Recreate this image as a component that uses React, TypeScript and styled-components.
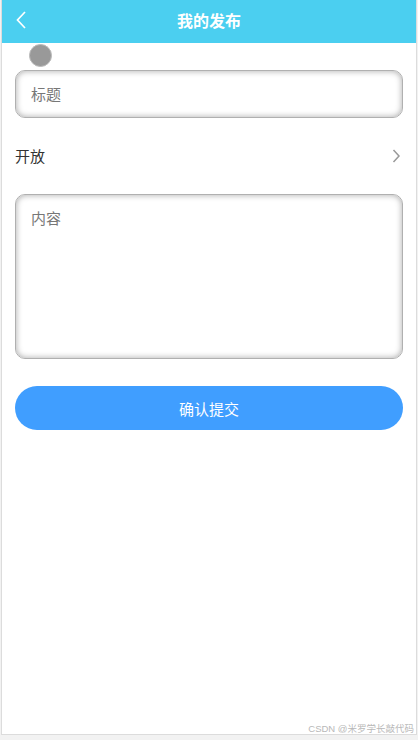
import React from 'react';
import styled, { createGlobalStyle } from 'styled-components';

const GlobalStyle = createGlobalStyle`
  html, body {
    margin: 0;
    padding: 0;
    background: #f2f2f2;
  }
  body {
    font-family: "Liberation Sans", "Noto Sans CJK SC", sans-serif;
  }
`;

const App = () => {
  return (
    <>
      <GlobalStyle />
      <Frame>
        <NavBar>
          <BackButton>
            <svg width="14" height="18" viewBox="0 0 14 18">
              <path d="M11 1 L3.5 9 L11 17" fill="none" stroke="#fff" strokeWidth="1.7" />
            </svg>
          </BackButton>
          <NavTitle>我的发布</NavTitle>
        </NavBar>
        <Body>
          <Dot />
          <TitleInput placeholder="标题" />
          <SelectRow>
            <RowLabel>开放</RowLabel>
            <svg width="10" height="16" viewBox="0 0 10 16">
              <path d="M2.5 2 L8 8 L2.5 14" fill="none" stroke="#999" strokeWidth="1.5" />
            </svg>
          </SelectRow>
          <ContentInput placeholder="内容" />
          <SubmitButton>确认提交</SubmitButton>
        </Body>
        <Watermark>CSDN @米罗学长敲代码</Watermark>
      </Frame>
    </>
  );
};

const Frame = styled.div`
  position: relative;
  margin-left: 1px;
  width: 414px;
  height: 734px;
  border: 1px solid #dcdcdc;
  border-top: none;
  background: #fff;
  display: flex;
  flex-direction: column;
`;

const NavBar = styled.header`
  position: relative;
  height: 43px;
  background-color: #4bcff0;
  display: flex;
  align-items: center;
  justify-content: center;
`;

const BackButton = styled.div`
  position: absolute;
  left: 12px;
  top: 11px;
  display: flex;
`;

const NavTitle = styled.div`
  color: #fff;
  font-size: 16px;
  font-weight: bold;
  padding-bottom: 3px;
`;

const Body = styled.div`
  display: flex;
  flex-direction: column;
  padding: 0 12px 0 13px;
`;

const Dot = styled.div`
  width: 23px;
  height: 23px;
  margin: 1px 0 0 14px;
  border-radius: 50%;
  background: #999;
  border: 1.5px solid #bbb;
  box-sizing: border-box;
`;

const fieldStyles = `
  box-sizing: border-box;
  width: 388px;
  border: 1px solid #b0b0b0;
  border-radius: 10px;
  box-shadow: inset 0 0 6px rgba(0, 0, 0, 0.35);
  background: #fff;
  font-family: "Liberation Sans", "Noto Sans CJK SC", sans-serif;
  font-size: 15px;
  color: #333;
  outline: none;
  padding: 0 15px;
  &::placeholder {
    color: #777;
  }
`;

const TitleInput = styled.input`
  ${fieldStyles}
  height: 48px;
  margin-top: 3px;
`;

const SelectRow = styled.div`
  display: flex;
  align-items: center;
  justify-content: space-between;
  height: 76px;
  width: 388px;
  padding-right: 2px;
  box-sizing: border-box;
`;

const RowLabel = styled.span`
  font-size: 15px;
  color: #333;
  margin-top: -2px;
`;

const ContentInput = styled.textarea`
  ${fieldStyles}
  height: 165px;
  padding: 12px 15px;
  resize: none;
`;

const SubmitButton = styled.button`
  margin-top: 27px;
  width: 388px;
  height: 44px;
  border: none;
  border-radius: 22px;
  background: #409eff;
  color: #fff;
  font-family: "Liberation Sans", "Noto Sans CJK SC", sans-serif;
  font-size: 15px;
`;

const Watermark = styled.div`
  position: absolute;
  right: 2px;
  bottom: 0;
  font-size: 9.5px;
  line-height: 11px;
  color: #b8b8b8;
`;

export default App;
